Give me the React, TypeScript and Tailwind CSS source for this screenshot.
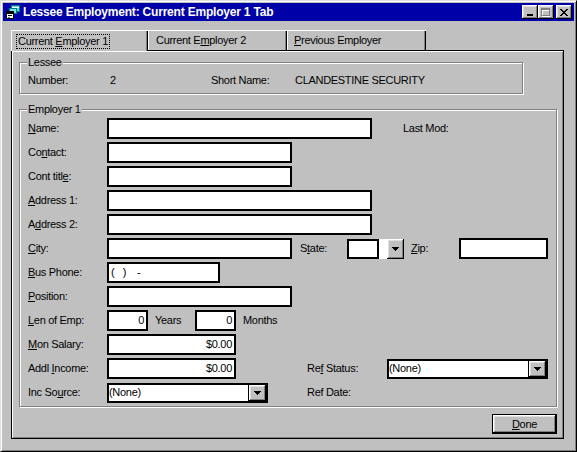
import type { ReactNode } from 'react';

const RAISED =
  'shadow-[inset_-1px_-1px_0_#000,inset_1px_1px_0_#fff,inset_-2px_-2px_0_#808080,inset_2px_2px_0_#dfdfdf]';
const FIELD = 'bg-white border-2 border-black';
const ETCHED = 'border border-[#808080] shadow-[inset_1px_1px_0_#fff,1px_1px_0_#fff]';

// "Co&ntact:" -> Co<u>n</u>tact:
function Acc({ s }: { s: string }) {
  const i = s.indexOf('&');
  if (i < 0) return <>{s}</>;
  return (
    <>
      {s.slice(0, i)}
      <u>{s[i + 1]}</u>
      {s.slice(i + 2)}
    </>
  );
}

const CLOSE_X = ['11....11', '.11..11.', '..1111..', '...11...', '..1111..', '.11..11.', '11....11'];

function TitleButton({ kind, gap }: { kind: 'min' | 'max' | 'close'; gap?: boolean }) {
  return (
    <div className={`w-[16px] h-[14px] bg-[#c0c0c0] flex items-center justify-center ${RAISED} ${gap ? 'ml-[2px]' : ''}`}>
      {kind === 'min' && (
        <svg width="8" height="7" viewBox="0 0 8 7" shapeRendering="crispEdges" className="mt-[1px]">
          <rect x="1" y="5" width="6" height="2" fill="#000" />
        </svg>
      )}
      {kind === 'max' && (
        <svg width="10" height="9" viewBox="0 0 10 9" shapeRendering="crispEdges">
          <path d="M1 1h8v1H1zM1 2h8v1H1zM1 1h1v8H1zM8 1h1v8H8zM1 8h8v1H1z" fill="#fff" />
          <path d="M0 0h9v2H0zM0 0h1v8H0zM8 0h1v8H8zM0 7h9v1H0z" fill="#808080" />
        </svg>
      )}
      {kind === 'close' && (
        <svg width="8" height="7" viewBox="0 0 8 7" shapeRendering="crispEdges">
          {CLOSE_X.flatMap((row, y) =>
            row.split('').map((c, x) => (c === '1' ? <rect key={`${x}-${y}`} x={x} y={y} width="1" height="1" fill="#000" /> : null)),
          )}
        </svg>
      )}
    </div>
  );
}

function AppIcon() {
  return (
    <svg width="16" height="16" viewBox="0 0 16 16" shapeRendering="crispEdges">
      <rect x="6" y="1" width="9" height="7" fill="#008080" />
      <rect x="7" y="2" width="7" height="5" fill="#5fd7d7" />
      <rect x="7" y="3" width="7" height="1" fill="#fff" />
      <rect x="4" y="4" width="8" height="6" fill="#008080" />
      <rect x="5" y="5" width="6" height="4" fill="#7fe5e5" />
      <rect x="1" y="7" width="8" height="8" fill="#000" />
      <rect x="2" y="8" width="6" height="6" fill="#fff" />
      <rect x="2" y="8" width="6" height="2" fill="#000" />
      <rect x="3" y="11" width="4" height="1" fill="#000" />
      <rect x="3" y="13" width="2" height="1" fill="#808080" />
    </svg>
  );
}

function DropBtn() {
  return (
    <div className={`w-[17px] h-full shrink-0 bg-[#c0c0c0] flex items-center justify-center ${RAISED}`}>
      <svg width="7" height="4" viewBox="0 0 7 4" shapeRendering="crispEdges">
        <path d="M0 0h7v1H0zM1 1h5v1H1zM2 2h3v1H2zM3 3h1v1H3z" fill="#000" />
      </svg>
    </div>
  );
}

function Field({ className, value, right }: { className: string; value?: string; right?: boolean }) {
  return (
    <div
      className={`${FIELD} ${className} h-[21px] shrink-0 flex items-center ${right ? 'justify-end pr-[2px]' : 'pl-[1px]'}`}
    >
      {value}
    </div>
  );
}

function Combo({ className, value }: { className: string; value: string }) {
  return (
    <div className={`${className} h-[20px] shrink-0 flex border-2 border-black bg-white`}>
      <div className="flex-1 flex items-center">{value}</div>
      <div className="border-l border-black h-full flex">
        <DropBtn />
      </div>
    </div>
  );
}

function Row({ label, children }: { label: string; children?: ReactNode }) {
  return (
    <div className="flex items-center h-[21px]">
      <span className="w-[79px] shrink-0">
        <Acc s={label} />
      </span>
      {children}
    </div>
  );
}

function Group({ title, className, children }: { title: string; className: string; children: ReactNode }) {
  return (
    <div className={`relative ${ETCHED} ${className}`}>
      <span className="absolute -top-[6px] left-[7px] px-[1px] bg-[#c0c0c0]">{title}</span>
      {children}
    </div>
  );
}

export default function App() {
  return (
    <div className="w-[577px] h-[452px] bg-[#c0c0c0] [font-family:'Liberation_Sans',Arial,sans-serif] text-[11px] leading-none tracking-[-0.3px] text-black select-none">
      <div className="h-full border border-t-[#dfdfdf] border-l-[#dfdfdf] border-r-black border-b-black">
        <div className="h-full p-[2px] shadow-[inset_1px_1px_0_#fff,inset_-1px_-1px_0_#808080] flex flex-col">
          {/* title bar */}
          <div className="h-[18px] bg-[#0000a8] flex items-center pl-[2px] pr-[2px] shrink-0">
            <AppIcon />
            <span className="ml-[2px] text-white font-bold text-[12px] tracking-[-0.2px]">
              Lessee Employment: Current Employer 1 Tab
            </span>
            <div className="ml-auto flex">
              <TitleButton kind="min" />
              <TitleButton kind="max" />
              <TitleButton kind="close" gap />
            </div>
          </div>

          {/* tabs */}
          <div className="mt-[9px] ml-[8px] flex items-start h-[20px]">
            <div className="relative z-10 w-[137px] h-[21px] -mb-px bg-[#c0c0c0] border-t border-l border-white shadow-[inset_-1px_0_0_#000,inset_-2px_0_0_#808080] pl-[4px] pt-[3px]">
              <span className="inline-block border border-dotted border-black px-[1px] py-[1px]">
                Current <u>E</u>mployer 1
              </span>
            </div>
            <div className="w-[139px] h-[20px] border-t border-l border-white shadow-[inset_-1px_0_0_#000,inset_-2px_0_0_#808080] flex items-center pl-[7px]">
              Current E<u>m</u>ployer 2
            </div>
            <div className="w-[139px] h-[20px] border-t border-l border-white shadow-[inset_-1px_0_0_#000,inset_-2px_0_0_#808080] flex items-center pl-[6px]">
              <span>
                <u>P</u>revious Employer
              </span>
            </div>
          </div>

          {/* tab panel */}
          <div className="ml-[8px] w-[553px] h-[389px] border border-black shadow-[inset_1px_1px_0_#fff,inset_-1px_-1px_0_#808080] pt-[11px] pl-[7px]">
            <Group title="Lessee" className="w-[504px] h-[32px]">
              <div className="flex items-center h-full pt-[4px] pl-[8px]">
                <span className="w-[82px]">Number:</span>
                <span className="w-[101px]">2</span>
                <span className="w-[84px]">Short Name:</span>
                <span>CLANDESTINE SECURITY</span>
              </div>
            </Group>

            <Group title="Employer 1" className="mt-[15px] w-[538px] h-[298px]">
              <div className="pt-[8px] pl-[8px] flex flex-col gap-[3px]">
                <Row label="&Name:">
                  <Field className="w-[265px]" />
                  <span className="ml-[31px]">Last Mod:</span>
                </Row>
                <Row label="Co&ntact:">
                  <Field className="w-[185px]" />
                </Row>
                <Row label="Cont titl&e:">
                  <Field className="w-[185px]" />
                </Row>
                <Row label="&Address 1:">
                  <Field className="w-[265px]" />
                </Row>
                <Row label="A&ddress 2:">
                  <Field className="w-[265px]" />
                </Row>
                <Row label="&City:">
                  <Field className="w-[185px]" />
                  <span className="ml-[8px] w-[47px]">
                    <Acc s="S&tate:" />
                  </span>
                  <div className="flex h-[20px]">
                    <div className={`${FIELD} w-[32px]`} />
                    <div className="w-[8px] bg-white" />
                    <DropBtn />
                  </div>
                  <span className="ml-[7px] w-[48px]">
                    <Acc s="&Zip:" />
                  </span>
                  <Field className="w-[89px]" />
                </Row>
                <Row label="&Bus Phone:">
                  <Field className="w-[113px] whitespace-pre pl-[2px]" value="(   )    -" />
                </Row>
                <Row label="&Position:">
                  <Field className="w-[185px]" />
                </Row>
                <Row label="&Len of Emp:">
                  <Field className="w-[41px]" value="0" right />
                  <span className="ml-[7px] w-[40px]">Years</span>
                  <Field className="w-[41px]" value="0" right />
                  <span className="ml-[7px]">Months</span>
                </Row>
                <Row label="&Mon Salary:">
                  <Field className="w-[129px]" value="$0.00" right />
                </Row>
                <Row label="Addl &Income:">
                  <Field className="w-[129px]" value="$0.00" right />
                  <span className="ml-[71px] w-[80px]">
                    <Acc s="Re&f Status:" />
                  </span>
                  <Combo className="w-[161px]" value="(None)" />
                </Row>
                <Row label="Inc So&urce:">
                  <Combo className="w-[161px]" value="(None)" />
                  <span className="ml-[39px]">Ref Date:</span>
                </Row>
              </div>
            </Group>

            <div className="w-[538px] mt-[7px] flex justify-end">
              <div className="w-[65px] h-[20px] border border-black">
                <div className={`h-full flex items-center justify-center ${RAISED}`}>
                  <span>
                    <u>D</u>one
                  </span>
                </div>
              </div>
            </div>
          </div>
        </div>
      </div>
    </div>
  );
}
